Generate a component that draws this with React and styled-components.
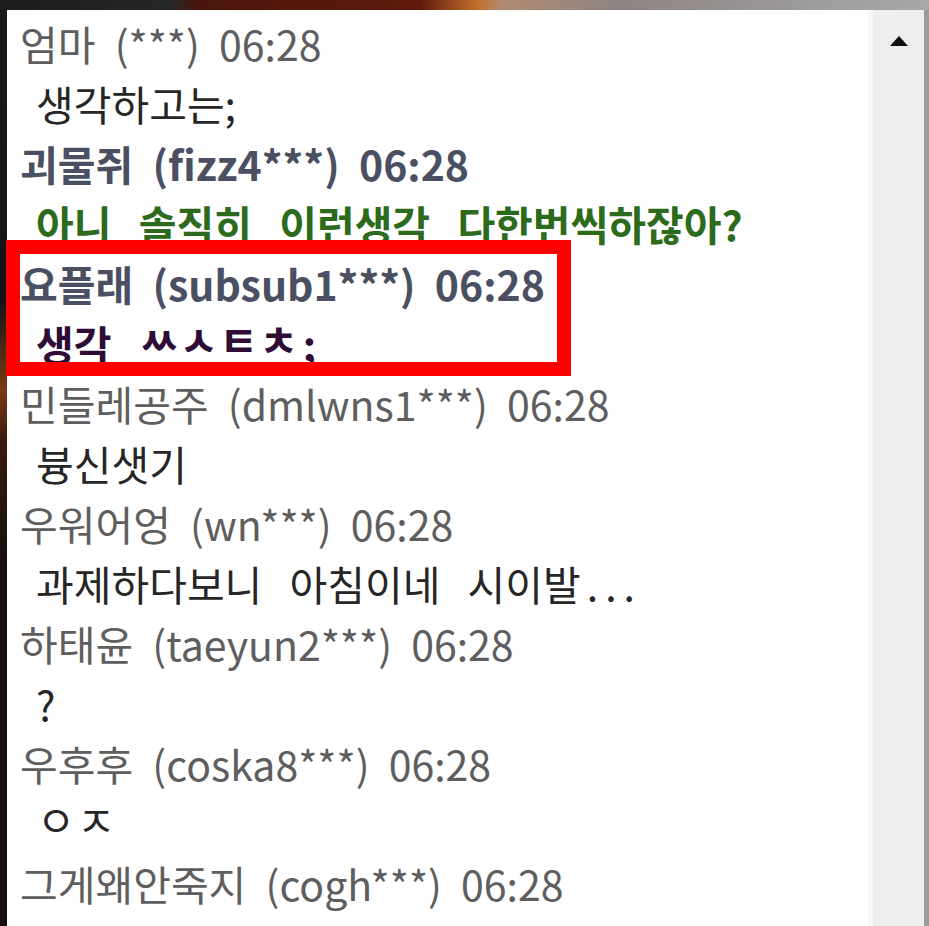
import React from "react";
import styled, { createGlobalStyle } from "styled-components";

const messages = [
  { name: "엄마", id: "***", time: "06:28", text: "생각하고는;" },
  {
    name: "괴물쥐",
    id: "fizz4***",
    time: "06:28",
    text: "아니 솔직히 이런생각 다한번씩하잖아?",
    bold: true,
    tone: "green",
  },
  {
    name: "요플래",
    id: "subsub1***",
    time: "06:28",
    text: "생각",
    jamo: "ㅆㅅㅌㅊ",
    tail: ";",
    bold: true,
    tone: "purple",
    marked: true,
  },
  { name: "민들레공주", id: "dmlwns1***", time: "06:28", text: "븅신샛기" },
  { name: "우워어엉", id: "wn***", time: "06:28", text: "과제하다보니 아침이네 시이발", dots: "..." },
  { name: "하태윤", id: "taeyun2***", time: "06:28", text: "?" },
  { name: "우후후", id: "coska8***", time: "06:28", jamo: "ㅇㅈ" },
  { name: "그게왜안죽지", id: "cogh***", time: "06:28" },
];

const toneColors = {
  green: "#2c6a1c",
  purple: "#2e0c36",
};

export default function App() {
  return (
    <>
      <GlobalStyle />
      <Frame>
        <Panel>
          <ChatList>
            {messages.map((m) => (
              <Entry key={m.name} $marked={m.marked}>
                <Header $bold={m.bold}>
                  {m.name} ({m.id}) {m.time}
                </Header>
                {(m.text || m.jamo) && (
                  <Message $bold={m.bold} $tone={m.tone}>
                    {m.text}
                    {m.text && m.jamo ? " " : ""}
                    {m.jamo &&
                      [...m.jamo].map((ch, i) => <Jamo key={i}>{ch}</Jamo>)}
                    {m.tail && <Tail>{m.tail}</Tail>}
                    {m.dots && <Dots>{m.dots}</Dots>}
                  </Message>
                )}
              </Entry>
            ))}
          </ChatList>
          <Scrollbar>
            <UpArrow viewBox="0 0 18 10">
              <path d="M9 0 L18 10 L0 10 Z" fill="#111" />
            </UpArrow>
          </Scrollbar>
          <RightEdge />
        </Panel>
      </Frame>
    </>
  );
}

const GlobalStyle = createGlobalStyle`
  html, body {
    margin: 0;
    padding: 0;
    background: #1a1a1a;
    overflow: hidden;
  }
`;

const Frame = styled.div`
  width: 929px;
  height: 926px;
  box-sizing: border-box;
  padding: 10px 0 0 7px;
  display: flex;
  overflow: hidden;
  background:
    linear-gradient(
        to right,
        #1c1c1c 0px,
        #262626 170px,
        #4a160c 200px,
        #5e1a0c 420px,
        #c2702c 478px,
        #b08a70 500px,
        #8e8482 620px,
        #9c9a9a 800px,
        #a8a8a8 100%
      )
      top left / 100% 10px no-repeat,
    linear-gradient(
        to bottom,
        #1a1a1a 0px,
        #141414 300px,
        #7a3a14 390px,
        #3a1a0c 440px,
        #161010 560px,
        #1a0e0e 100%
      )
      top left / 7px 100% no-repeat;
`;

const Panel = styled.div`
  flex: 1;
  display: flex;
  background: #ffffff;
`;

const ChatList = styled.div`
  flex: 1;
  padding: 3px 0 0 13px;
  font-family: "Noto Sans CJK KR", "Noto Sans", sans-serif;
  font-size: 41px;
  line-height: 60px;
  white-space: nowrap;
`;

const Entry = styled.div`
  position: relative;
  &::after {
    content: "";
    display: ${(p) => (p.$marked ? "block" : "none")};
    position: absolute;
    left: -14px;
    top: -13px;
    width: 565px;
    height: 136px;
    box-sizing: border-box;
    border: 14px solid #fe0000;
    pointer-events: none;
  }
`;

const Header = styled.div`
  word-spacing: 10px;
  color: ${(p) => (p.$bold ? "#4a5062" : "#5e5e5e")};
  font-weight: ${(p) => (p.$bold ? 700 : 400)};
`;

const Message = styled.div`
  padding-left: 16px;
  word-spacing: 18px;
  color: ${(p) => toneColors[p.$tone] || "#262626"};
  font-weight: ${(p) => (p.$bold ? 700 : 400)};
`;

const Jamo = styled.span`
  display: inline-block;
  width: 40px;
  text-align: center;
  font-size: 42px;
  transform: translateY(-4px);
`;

const Tail = styled.span`
  padding-left: 4px;
`;

const Dots = styled.span`
  letter-spacing: 7px;
  padding-left: 6px;
`;

const Scrollbar = styled.div`
  width: 51px;
  border-left: 5px solid #f7f7f7;
  background: #eeeeee;
  display: flex;
  justify-content: center;
  align-items: flex-start;
  padding-top: 26px;
`;

const UpArrow = styled.svg`
  width: 18px;
  height: 10px;
`;

const RightEdge = styled.div`
  width: 5px;
  background: #9c9c9c;
`;
